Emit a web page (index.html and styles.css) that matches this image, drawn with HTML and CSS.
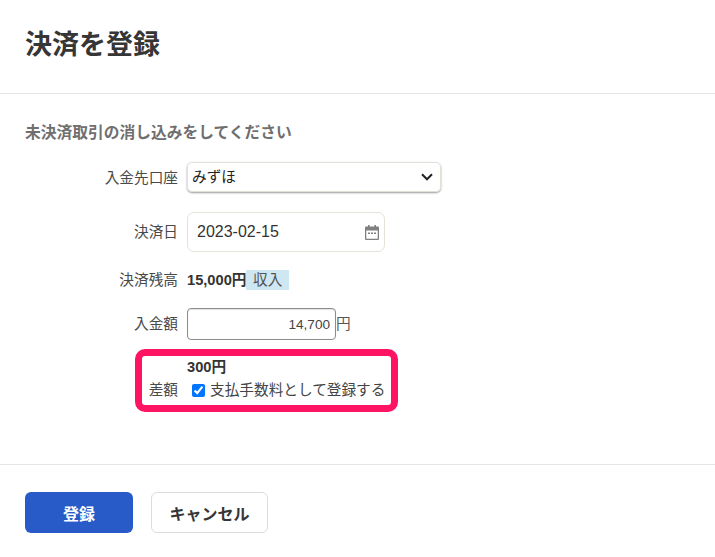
FILE: index.html
```html
<!DOCTYPE html>
<html lang="ja">
<head>
<meta charset="utf-8">
<title>決済を登録</title>
<link rel="stylesheet" href="styles.css">
</head>
<body>
<div class="modal">
  <header class="head"><h1>決済を登録</h1></header>
  <main class="body">
    <p class="lead">未決済取引の消し込みをしてください</p>
    <div class="row row-select">
      <span class="label">入金先口座</span>
      <div class="select"><span>みずほ</span>
        <svg class="chev" width="12" height="8" viewBox="0 0 12 8"><path d="M1 1.300 6 6.300l5-5" fill="none" stroke="#222" stroke-width="2"/></svg>
      </div>
    </div>
    <div class="row row-date">
      <span class="label">決済日</span>
      <div class="date"><span>2023-02-15</span>
        <svg width="14" height="15" viewBox="0 0 14 15"><path fill="#808080" d="M3 0h1.600v1.500h4.800V0H11v1.500h2a1 1 0 0 1 1 1V14a1 1 0 0 1-1 1H1a1 1 0 0 1-1-1V2.500a1 1 0 0 1 1-1h2zM1.300 5.500v8.200h11.400V5.500z"/><path fill="#808080" d="M3 7.500h2v1.600H3zm3 0h2v1.600H6zm3 0h2v1.600H9z"/></svg>
      </div>
    </div>
    <div class="row row-balance">
      <span class="label">決済残高</span>
      <div class="value"><b>15,000円</b><span class="tag">収入</span></div>
    </div>
    <div class="row row-amount">
      <span class="label">入金額</span>
      <div class="value"><div class="amount">14,700</div><span class="unit">円</span></div>
    </div>
    <div class="row row-diff">
      <span class="label">差額</span>
      <div class="diff">
        <b>300円</b>
        <label class="check"><input type="checkbox" checked><span>支払手数料として登録する</span></label>
      </div>
      <div class="highlight"></div>
    </div>
  </main>
  <footer class="foot">
    <button class="btn primary">登録</button>
    <button class="btn ghost">キャンセル</button>
  </footer>
</div>
</body>
</html>
```
FILE: styles.css
```css
* { box-sizing: border-box; }
html, body { margin: 0; padding: 0; background: #fff; }
body {
  font-family: "Liberation Sans", "Noto Sans CJK JP", sans-serif;
  color: #333;
  font-size: 14.67px;
  line-height: 20px;
  height: 557px;
  overflow: hidden;
}
.modal { width: 715px; }
.head {
  height: 94px;
  padding: 26px 25px 0;
  border-bottom: 1px solid #e5e5e5;
}
.head h1 {
  margin: 0;
  font-size: 27px;
  line-height: 38px;
  font-weight: 700;
  color: #363636;
}
.body { height: 370px; padding: 29px 25px 0; }
.lead {
  margin: 0;
  font-size: 15.75px;
  line-height: 20px;
  font-weight: 700;
  color: #6f6f6f;
}
.row {
  display: grid;
  grid-template-columns: 153px auto;
  column-gap: 9px;
  justify-content: start;
  align-items: center;
  position: relative;
}
.label { text-align: right; color: #4a4a4a; line-height: 20px; }
.row-select { margin-top: 19px; }
.row-select .label { padding-top: 1px; }
.select {
  width: 254px;
  height: 30px;
  border: 1px solid #e3e0da;
  border-radius: 5px;
  box-shadow: 0 1px 2px rgba(0, 0, 0, .4);
  display: flex;
  align-items: center;
  justify-content: space-between;
  padding: 0 7px 1px 4px;
  color: #222;
}
.row-date { margin-top: 20px; }
.date {
  width: 198px;
  height: 40px;
  border: 1px solid #e6e2da;
  border-radius: 7px;
  display: flex;
  align-items: center;
  justify-content: space-between;
  padding: 0 5px 0 9px;
  font-size: 16px;
  color: #333;
}
.row-balance { margin-top: 18px; }
.value { display: flex; align-items: center; }
.value b { color: #333; }
.tag {
  background: #cfe7f3;
  color: #555;
  padding: 0 6.500px;
  line-height: 20px;
}
.row-amount { margin-top: 18px; }
.amount {
  width: 149px;
  height: 32px;
  border: 1px solid #8c8c8c;
  border-radius: 4px;
  box-shadow: inset 0 1px 1px rgba(0, 0, 0, .12);
  font-size: 13.6px;
  line-height: 31px;
  text-align: right;
  padding-right: 5px;
  color: #444;
}
.unit { color: #555; }
.row-diff { margin-top: 17px; align-items: end; }
.diff { display: flex; flex-direction: column; }
.diff b { line-height: 20px; }
.check { display: flex; align-items: center; height: 25px; padding-top: 1px; color: #444; }
.check input {
  width: 13px;
  height: 13px;
  margin: 0 5px 0 5px;
  accent-color: #0075ff;
}
.row-diff .label { line-height: 24px; }
.highlight {
  position: absolute;
  left: 110px;
  top: -8px;
  width: 263px;
  height: 63px;
  border: 7px solid #ff1464;
  border-radius: 10px;
  pointer-events: none;
}
.foot {
  border-top: 1px solid #e5e5e5;
  padding: 27px 25px 0;
  display: flex;
  gap: 18px;
}
.btn {
  height: 41px;
  border-radius: 6px;
  font-family: inherit;
  font-size: 16px;
  font-weight: 700;
}
.primary {
  width: 108px;
  border: none;
  background: #285bc8;
  color: #fff;
}
.ghost {
  width: 117px;
  background: #fff;
  border: 1px solid #dcdcdc;
  color: #363636;
}
```
